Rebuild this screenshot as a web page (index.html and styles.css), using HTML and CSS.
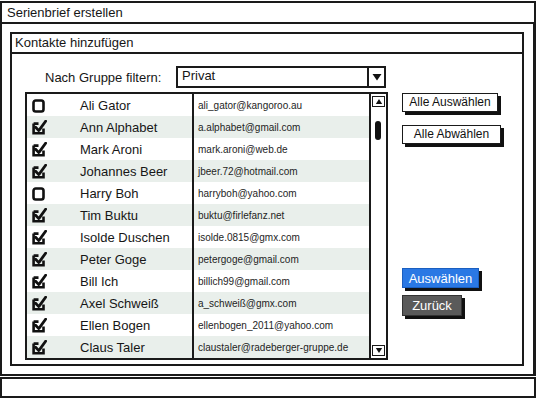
FILE: index.html
```html
<!DOCTYPE html>
<html lang="de">
<head>
<meta charset="utf-8">
<title>Serienbrief erstellen</title>
<link rel="stylesheet" href="styles.css">
</head>
<body>
<div class="window">
  <div class="titlebar">Serienbrief erstellen</div>
  <div class="main">
    <div class="panel">
      <div class="panel-head">Kontakte hinzufügen</div>
      <div class="panel-body">
        <div class="filter">
          <span class="filter-label">Nach Gruppe filtern:</span>
          <div class="select">
            <span class="select-value">Privat</span>
            <span class="select-btn"><svg width="10" height="8" viewBox="0 0 10 8"><path d="M0.5 1 H9.5 L5 7.5 Z" fill="#111"/></svg></span>
          </div>
        </div>
        <div class="content">
          <div class="list">
            <div class="rows">
              <div class="row"><span class="name"><svg class="cb" viewBox="0 0 15 15"><rect x="1.5" y="2.5" width="10" height="11" rx="2.2" fill="none" stroke="#111" stroke-width="2.6"/></svg>Ali Gator</span><span class="mail">ali_gator@kangoroo.au</span></div>
              <div class="row"><span class="name"><svg class="cb" viewBox="0 0 15 15"><path d="M1.6 3.6 V13.3 H11.5 V8.5 M1.6 3.6 H6.5" fill="none" stroke="#111" stroke-width="2.6"/><path d="M3.6 7.2 L6.8 10.6 L13.6 1.2" fill="none" stroke="#111" stroke-width="2.8" stroke-linejoin="round" stroke-linecap="round"/></svg>Ann Alphabet</span><span class="mail">a.alphabet@gmail.com</span></div>
              <div class="row"><span class="name"><svg class="cb" viewBox="0 0 15 15"><path d="M1.6 3.6 V13.3 H11.5 V8.5 M1.6 3.6 H6.5" fill="none" stroke="#111" stroke-width="2.6"/><path d="M3.6 7.2 L6.8 10.6 L13.6 1.2" fill="none" stroke="#111" stroke-width="2.8" stroke-linejoin="round" stroke-linecap="round"/></svg>Mark Aroni</span><span class="mail">mark.aroni@web.de</span></div>
              <div class="row"><span class="name"><svg class="cb" viewBox="0 0 15 15"><path d="M1.6 3.6 V13.3 H11.5 V8.5 M1.6 3.6 H6.5" fill="none" stroke="#111" stroke-width="2.6"/><path d="M3.6 7.2 L6.8 10.6 L13.6 1.2" fill="none" stroke="#111" stroke-width="2.8" stroke-linejoin="round" stroke-linecap="round"/></svg>Johannes Beer</span><span class="mail">jbeer.72@hotmail.com</span></div>
              <div class="row"><span class="name"><svg class="cb" viewBox="0 0 15 15"><rect x="1.5" y="2.5" width="10" height="11" rx="2.2" fill="none" stroke="#111" stroke-width="2.6"/></svg>Harry Boh</span><span class="mail">harryboh@yahoo.com</span></div>
              <div class="row"><span class="name"><svg class="cb" viewBox="0 0 15 15"><path d="M1.6 3.6 V13.3 H11.5 V8.5 M1.6 3.6 H6.5" fill="none" stroke="#111" stroke-width="2.6"/><path d="M3.6 7.2 L6.8 10.6 L13.6 1.2" fill="none" stroke="#111" stroke-width="2.8" stroke-linejoin="round" stroke-linecap="round"/></svg>Tim Buktu</span><span class="mail">buktu@firlefanz.net</span></div>
              <div class="row"><span class="name"><svg class="cb" viewBox="0 0 15 15"><path d="M1.6 3.6 V13.3 H11.5 V8.5 M1.6 3.6 H6.5" fill="none" stroke="#111" stroke-width="2.6"/><path d="M3.6 7.2 L6.8 10.6 L13.6 1.2" fill="none" stroke="#111" stroke-width="2.8" stroke-linejoin="round" stroke-linecap="round"/></svg>Isolde Duschen</span><span class="mail">isolde.0815@gmx.com</span></div>
              <div class="row"><span class="name"><svg class="cb" viewBox="0 0 15 15"><path d="M1.6 3.6 V13.3 H11.5 V8.5 M1.6 3.6 H6.5" fill="none" stroke="#111" stroke-width="2.6"/><path d="M3.6 7.2 L6.8 10.6 L13.6 1.2" fill="none" stroke="#111" stroke-width="2.8" stroke-linejoin="round" stroke-linecap="round"/></svg>Peter Goge</span><span class="mail">petergoge@gmail.com</span></div>
              <div class="row"><span class="name"><svg class="cb" viewBox="0 0 15 15"><path d="M1.6 3.6 V13.3 H11.5 V8.5 M1.6 3.6 H6.5" fill="none" stroke="#111" stroke-width="2.6"/><path d="M3.6 7.2 L6.8 10.6 L13.6 1.2" fill="none" stroke="#111" stroke-width="2.8" stroke-linejoin="round" stroke-linecap="round"/></svg>Bill Ich</span><span class="mail">billich99@gmail.com</span></div>
              <div class="row"><span class="name"><svg class="cb" viewBox="0 0 15 15"><path d="M1.6 3.6 V13.3 H11.5 V8.5 M1.6 3.6 H6.5" fill="none" stroke="#111" stroke-width="2.6"/><path d="M3.6 7.2 L6.8 10.6 L13.6 1.2" fill="none" stroke="#111" stroke-width="2.8" stroke-linejoin="round" stroke-linecap="round"/></svg>Axel Schweiß</span><span class="mail">a_schweiß@gmx.com</span></div>
              <div class="row"><span class="name"><svg class="cb" viewBox="0 0 15 15"><path d="M1.6 3.6 V13.3 H11.5 V8.5 M1.6 3.6 H6.5" fill="none" stroke="#111" stroke-width="2.6"/><path d="M3.6 7.2 L6.8 10.6 L13.6 1.2" fill="none" stroke="#111" stroke-width="2.8" stroke-linejoin="round" stroke-linecap="round"/></svg>Ellen Bogen</span><span class="mail">ellenbogen_2011@yahoo.com</span></div>
              <div class="row"><span class="name"><svg class="cb" viewBox="0 0 15 15"><path d="M1.6 3.6 V13.3 H11.5 V8.5 M1.6 3.6 H6.5" fill="none" stroke="#111" stroke-width="2.6"/><path d="M3.6 7.2 L6.8 10.6 L13.6 1.2" fill="none" stroke="#111" stroke-width="2.8" stroke-linejoin="round" stroke-linecap="round"/></svg>Claus Taler</span><span class="mail">claustaler@radeberger-gruppe.de</span></div>
            </div>
            <div class="scroll">
              <span class="arrow"><svg width="10" height="8" viewBox="0 0 10 8"><path d="M1 7 H9 L5 1 Z" fill="#111"/></svg></span>
              <span class="thumb"></span>
              <span class="arrow down"><svg width="10" height="8" viewBox="0 0 10 8"><path d="M1 1 H9 L5 7 Z" fill="#111"/></svg></span>
            </div>
          </div>
          <div class="actions">
            <button class="btn btn-all">Alle Auswählen</button>
            <button class="btn btn-none">Alle Abwählen</button>
            <button class="btn btn-primary">Auswählen</button>
            <button class="btn btn-back">Zurück</button>
          </div>
        </div>
      </div>
    </div>
  </div>
  <div class="statusbar"></div>
</div>
</body>
</html>
```
FILE: styles.css
```css
* { box-sizing: border-box; }
html, body { margin: 0; padding: 0; background: #fff; }
body {
  font-family: "Liberation Sans", Arial, sans-serif;
  color: #161616;
  width: 537px;
  height: 400px;
  overflow: hidden;
}
.window {
  width: 537px;
  height: 400px;
  padding: 1px 1px 0 0;
  display: flex;
  flex-direction: column;
}
.titlebar {
  height: 23px;
  border: 2px solid #1a1a1a;
  font-size: 13px;
  line-height: 19px;
  padding-left: 5px;
}
.main {
  height: 352px;
  border: 2px solid #1a1a1a;
  border-top: none;
  border-right-width: 3px;
  padding: 8px 0 0 8px;
}
.statusbar {
  margin-top: 1px;
  height: 21px;
  border: 2px solid #1a1a1a;
}
.panel {
  width: 514px;
}
.panel-head {
  height: 22px;
  border: 2px solid #1a1a1a;
  font-size: 13px;
  line-height: 18px;
  padding-left: 3px;
}
.panel-body {
  height: 312px;
  border: 2px solid #1a1a1a;
  border-top: none;
  padding: 12px 0 0 0;
}
.filter {
  display: flex;
  align-items: center;
  height: 22px;
}
.filter-label {
  width: 164px;
  padding-left: 33px;
  font-size: 13px;
}
.select {
  width: 210px;
  height: 22px;
  border: 2px solid #1a1a1a;
  display: flex;
  align-items: stretch;
}
.select-value {
  flex: 1;
  font-size: 13px;
  line-height: 16px;
  padding-left: 4px;
}
.select-btn {
  width: 17px;
  border-left: 2px solid #1a1a1a;
  display: flex;
  align-items: center;
  justify-content: center;
}
.content {
  display: flex;
  margin-top: 4px;
  padding-left: 13px;
}
.list {
  display: flex;
  border: 2px solid #1a1a1a;
  height: 268px;
}
.rows {
  width: 342px;
}
.row {
  display: grid;
  grid-template-columns: 167px 175px;
  height: 22px;
  background: #fff;
}
.row:nth-child(even) { background: #e9efeb; }
.name {
  display: flex;
  align-items: center;
  border-right: 2px solid #1a1a1a;
  font-size: 13px;
  padding-left: 5px;
}
.cb {
  width: 15px;
  height: 15px;
  margin-right: 33px;
  flex: none;
}
.mail {
  display: flex;
  align-items: center;
  padding-left: 4px;
  font-size: 10px;
  white-space: nowrap;
  color: #1e1e1e;
}
.scroll {
  width: 17px;
  border-left: 2px solid #1a1a1a;
  display: flex;
  flex-direction: column;
  align-items: center;
  padding: 2px 0;
}
.arrow {
  width: 13px;
  height: 11px;
  border: 1px solid #1a1a1a;
  display: flex;
  align-items: center;
  justify-content: center;
}
.arrow svg { width: 8px; height: 7px; }
.thumb {
  width: 6px;
  height: 19px;
  background: #111;
  border-radius: 3px;
  margin-top: 14px;
  margin-left: -1px;
}
.arrow.down { margin-top: auto; }
.actions {
  display: flex;
  flex-direction: column;
  align-items: flex-start;
  margin-left: 14px;
}
.btn {
  font-family: "Liberation Sans", Arial, sans-serif;
  font-size: 12px;
  height: 19px;
  padding: 0 4px;
  border: 1.5px solid #1a1a1a;
  background: #fff;
  color: #111;
  box-shadow: 3px 3px 0 #111;
  line-height: 15px;
}
.btn-all { margin-top: 1px; width: 96px; }
.btn-none { margin-top: 13px; width: 99px; }
.btn-primary {
  margin-top: 124px;
  width: 77px;
  height: 20px;
  background: #2a78e4;
  color: #fff;
  border-color: #1b5fc0;
  font-size: 13px;
}
.btn-back {
  margin-top: 7px;
  width: 60px;
  height: 21px;
  background: #5a5a5a;
  color: #fff;
  border-color: #333;
  font-size: 13px;
}
```
